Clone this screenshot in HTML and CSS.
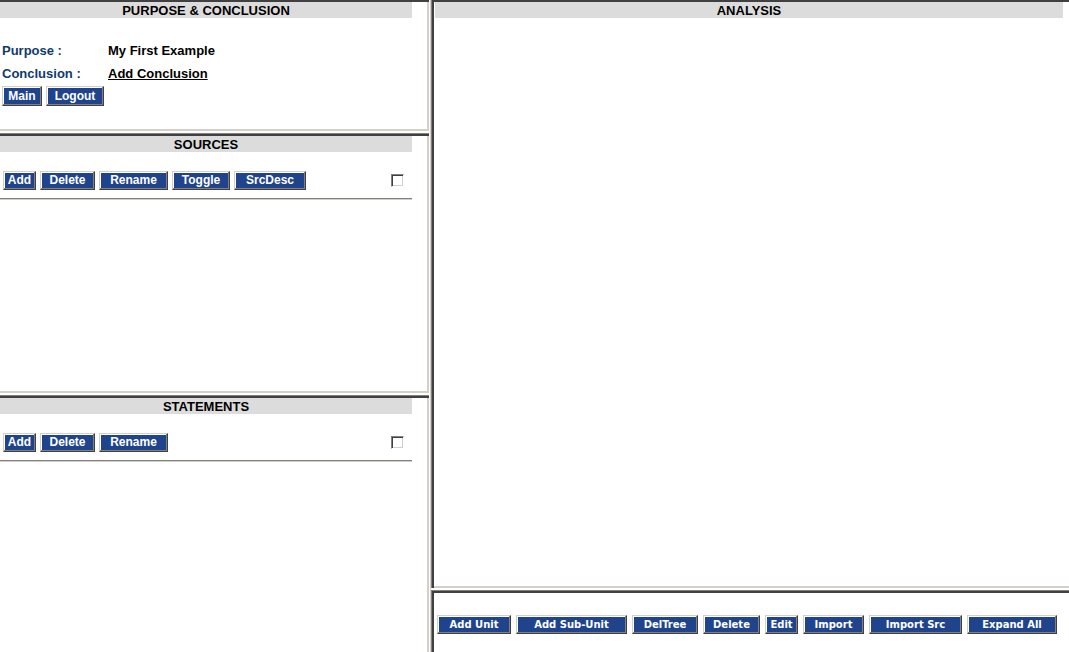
FILE: index.html
```html
<!DOCTYPE html>
<html>
<head>
<meta charset="utf-8">
<title>Analysis</title>
<link rel="stylesheet" href="styles.css">
</head>
<body>
<div class="frameset">
  <div class="col col-left">
    <div class="frame frame-left frame-first f-purpose">
      <div class="hdr hdr-left">PURPOSE &amp; CONCLUSION</div>
      <div class="info">
        <div class="lbl">Purpose :</div>
        <div class="val">My First Example</div>
        <div class="lbl">Conclusion :</div>
        <div class="val"><a class="link" href="#">Add Conclusion</a></div>
      </div>
      <div class="btns">
        <button class="btn w40">Main</button>
        <button class="btn w58">Logout</button>
      </div>
    </div>
    <div class="frame frame-left f-sources">
      <div class="hdr hdr-left">SOURCES</div>
      <div class="toolbar">
        <div class="btns">
          <button class="btn w33">Add</button>
          <button class="btn w55">Delete</button>
          <button class="btn w69">Rename</button>
          <button class="btn w58">Toggle</button>
          <button class="btn w72">SrcDesc</button>
        </div>
        <span class="chk"></span>
      </div>
      <div class="rule"></div>
    </div>
    <div class="frame frame-left frame-last f-statements">
      <div class="hdr hdr-left">STATEMENTS</div>
      <div class="toolbar">
        <div class="btns">
          <button class="btn w33">Add</button>
          <button class="btn w55">Delete</button>
          <button class="btn w69">Rename</button>
        </div>
        <span class="chk"></span>
      </div>
      <div class="rule"></div>
    </div>
  </div>
  <div class="vgap"></div>
  <div class="col col-right">
    <div class="frame frame-right frame-first f-analysis">
      <div class="hdr hdr-right">ANALYSIS</div>
    </div>
    <div class="frame frame-right frame-last f-actions">
      <div class="abtns">
        <button class="btn abtn w74">Add Unit</button>
        <button class="btn abtn w111">Add Sub-Unit</button>
        <button class="btn abtn w66">DelTree</button>
        <button class="btn abtn w57">Delete</button>
        <button class="btn abtn w33">Edit</button>
        <button class="btn abtn w61">Import</button>
        <button class="btn abtn w93">Import Src</button>
        <button class="btn abtn w90">Expand All</button>
      </div>
    </div>
  </div>
</div>
</body>
</html>
```

FILE: styles.css
```css
* { box-sizing: border-box; }
html, body { margin: 0; padding: 0; }
body {
  width: 1069px;
  height: 652px;
  overflow: hidden;
  font-family: "Liberation Sans", Arial, sans-serif;
  background: #ffffff;
}
.frameset {
  display: flex;
  width: 1069px;
  height: 652px;
}
.col {
  display: flex;
  flex-direction: column;
  gap: 2px;
  background: #ffffff;
  height: 652px;
}
.col-left { width: 429px; }
.col-right { width: 638px; }
.vgap {
  width: 2px;
  height: 652px;
  background: #d4d0c8;
  border-left: 1px solid #ffffff;
}
.frame {
  background: #ffffff;
  padding-top: 3px;
  padding-bottom: 2px;
}
.frame-left {
  padding-right: 2px;
  box-shadow: inset 0 1px 0 #808080, inset 0 3px 0 #404040, inset -2px -2px 0 #d4d0c8;
}
.frame-right {
  padding-left: 3px;
  box-shadow: inset 1px 1px 0 #808080, inset 3px 3px 0 #404040, inset 0 -2px 0 #d4d0c8;
}
.frame-left.frame-first {
  padding-top: 2px;
  box-shadow: inset 0 2px 0 #404040, inset -2px -2px 0 #d4d0c8;
}
.frame-right.frame-first {
  padding-top: 2px;
  box-shadow: inset 1px 0 0 #808080, inset 3px 2px 0 #404040, inset 0 -2px 0 #d4d0c8;
}
.frame-left.frame-last {
  box-shadow: inset 0 1px 0 #808080, inset 0 3px 0 #404040, inset -2px 0 0 #d4d0c8;
}
.frame-right.frame-last {
  box-shadow: inset 1px 1px 0 #808080, inset 3px 3px 0 #404040;
}
.f-purpose { height: 131px; }
.f-sources { height: 260px; }
.f-statements { flex: 1; }
.f-analysis { height: 588px; }
.f-actions { flex: 1; }

.hdr {
  height: 16px;
  padding-top: 1px;
  line-height: 15px;
  background: #dcdcdc;
  text-align: center;
  font-weight: bold;
  font-size: 13px;
  color: #000000;
  overflow: hidden;
}
.hdr-left { width: 412px; }
.hdr-right { width: 628px; margin-left: 1px; }

.info {
  display: grid;
  grid-template-columns: 106px auto;
  padding-top: 21px;
  padding-left: 2px;
  font-size: 13px;
  font-weight: bold;
  line-height: 23px;
}
.lbl { color: #0f3a6e; }
.val { color: #000000; }
.link { color: #000000; text-decoration: underline; }

.btns {
  display: flex;
  gap: 4px;
  padding-left: 3px;
}
.f-purpose .btns { margin-top: 1px; padding-left: 2px; }
.btn {
  height: 19px;
  padding: 0;
  margin: 0;
  background: #20448c;
  color: #ffffff;
  font-family: "Liberation Sans", Arial, sans-serif;
  font-weight: bold;
  font-size: 12px;
  line-height: 15px;
  text-align: center;
  border: 1px solid;
  border-color: #d4d0c8 #404040 #404040 #d4d0c8;
  box-shadow: inset -1px -1px 0 #808080, inset 1px 1px 0 #ffffff;
  cursor: pointer;
}
.f-purpose .btn { height: 20px; }
.toolbar {
  display: flex;
  justify-content: space-between;
  align-items: center;
  width: 412px;
  margin-top: 19px;
}
.chk {
  width: 13px;
  height: 13px;
  margin-right: 8px;
  background: #ffffff;
  border: 1px solid;
  border-color: #808080 #ffffff #ffffff #808080;
  box-shadow: inset 1px 1px 0 #404040, inset -1px -1px 0 #d4d0c8;
}
.rule {
  width: 412px;
  height: 2px;
  margin-top: 8px;
  border-top: 1px solid #808080;
  border-bottom: 1px solid #d4d0c8;
}
.abtns {
  display: flex;
  gap: 5px;
  padding-left: 3px;
  margin-top: 22px;
}
.abtn {
  font-family: "DejaVu Sans", Verdana, sans-serif;
  font-size: 10px;
  height: 19px;
  line-height: 15px;
}
.w33 { width: 33px; }
.w40 { width: 40px; }
.w55 { width: 55px; }
.w57 { width: 57px; }
.w58 { width: 58px; }
.w61 { width: 61px; }
.w66 { width: 66px; }
.w69 { width: 69px; }
.w72 { width: 72px; }
.w74 { width: 74px; }
.w90 { width: 90px; }
.w93 { width: 93px; }
.w111 { width: 111px; }
```
